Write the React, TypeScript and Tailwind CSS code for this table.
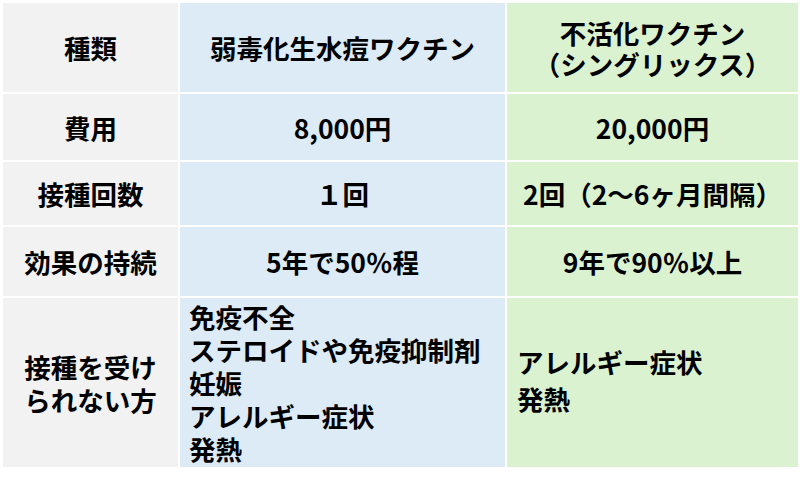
const font = { fontFamily: '"Noto Sans CJK JP", "Noto Sans", sans-serif' }

const rows: { label: string[]; live: string[]; inactive: string[]; h: string; list?: boolean }[] = [
  { label: ["種類"], live: ["弱毒化生水痘ワクチン"], inactive: ["不活化ワクチン", "（シングリックス）"], h: "h-[89px]" },
  { label: ["費用"], live: ["8,000円"], inactive: ["20,000円"], h: "h-[66px]" },
  { label: ["接種回数"], live: ["１回"], inactive: ["2回（2～6ヶ月間隔）"], h: "h-[63px]" },
  { label: ["効果の持続"], live: ["5年で50％程"], inactive: ["9年で90％以上"], h: "h-[69px]" },
  {
    label: ["接種を受け", "られない方"],
    live: ["免疫不全", "ステロイドや免疫抑制剤", "妊娠", "アレルギー症状", "発熱"],
    inactive: ["アレルギー症状", "発熱"],
    h: "h-[169px]",
    list: true,
  },
]

export default function App() {
  return (
    <div className="w-[800px] h-[487px] bg-white pt-[3px] pl-[3px]" style={font}>
      <div className="grid grid-cols-[175px_325px_291px] gap-[2px] text-[26.5px] font-bold text-black">
        {rows.map((r, i) => (
          <div key={i} className="contents">
            <div className={`${r.h} bg-[#f2f2f2] flex flex-col items-center justify-center leading-[33px]`}>
              {r.label.map((t) => (
                <span key={t}>{t}</span>
              ))}
            </div>
            <div
              className={`${r.h} bg-[#ddebf7] flex flex-col justify-center leading-[33px] ${
                r.list ? "items-start pl-[9px]" : "items-center"
              }`}
            >
              {r.live.map((t) => (
                <span key={t}>{t}</span>
              ))}
            </div>
            <div
              className={`${r.h} bg-[#daf2d0] flex flex-col justify-center ${
                r.list ? "items-start pl-[10px] pb-[6px] leading-[37px]" : "items-center leading-[31px]"
              }`}
            >
              {r.inactive.map((t) => (
                <span key={t}>{t}</span>
              ))}
            </div>
          </div>
        ))}
      </div>
    </div>
  )
}
